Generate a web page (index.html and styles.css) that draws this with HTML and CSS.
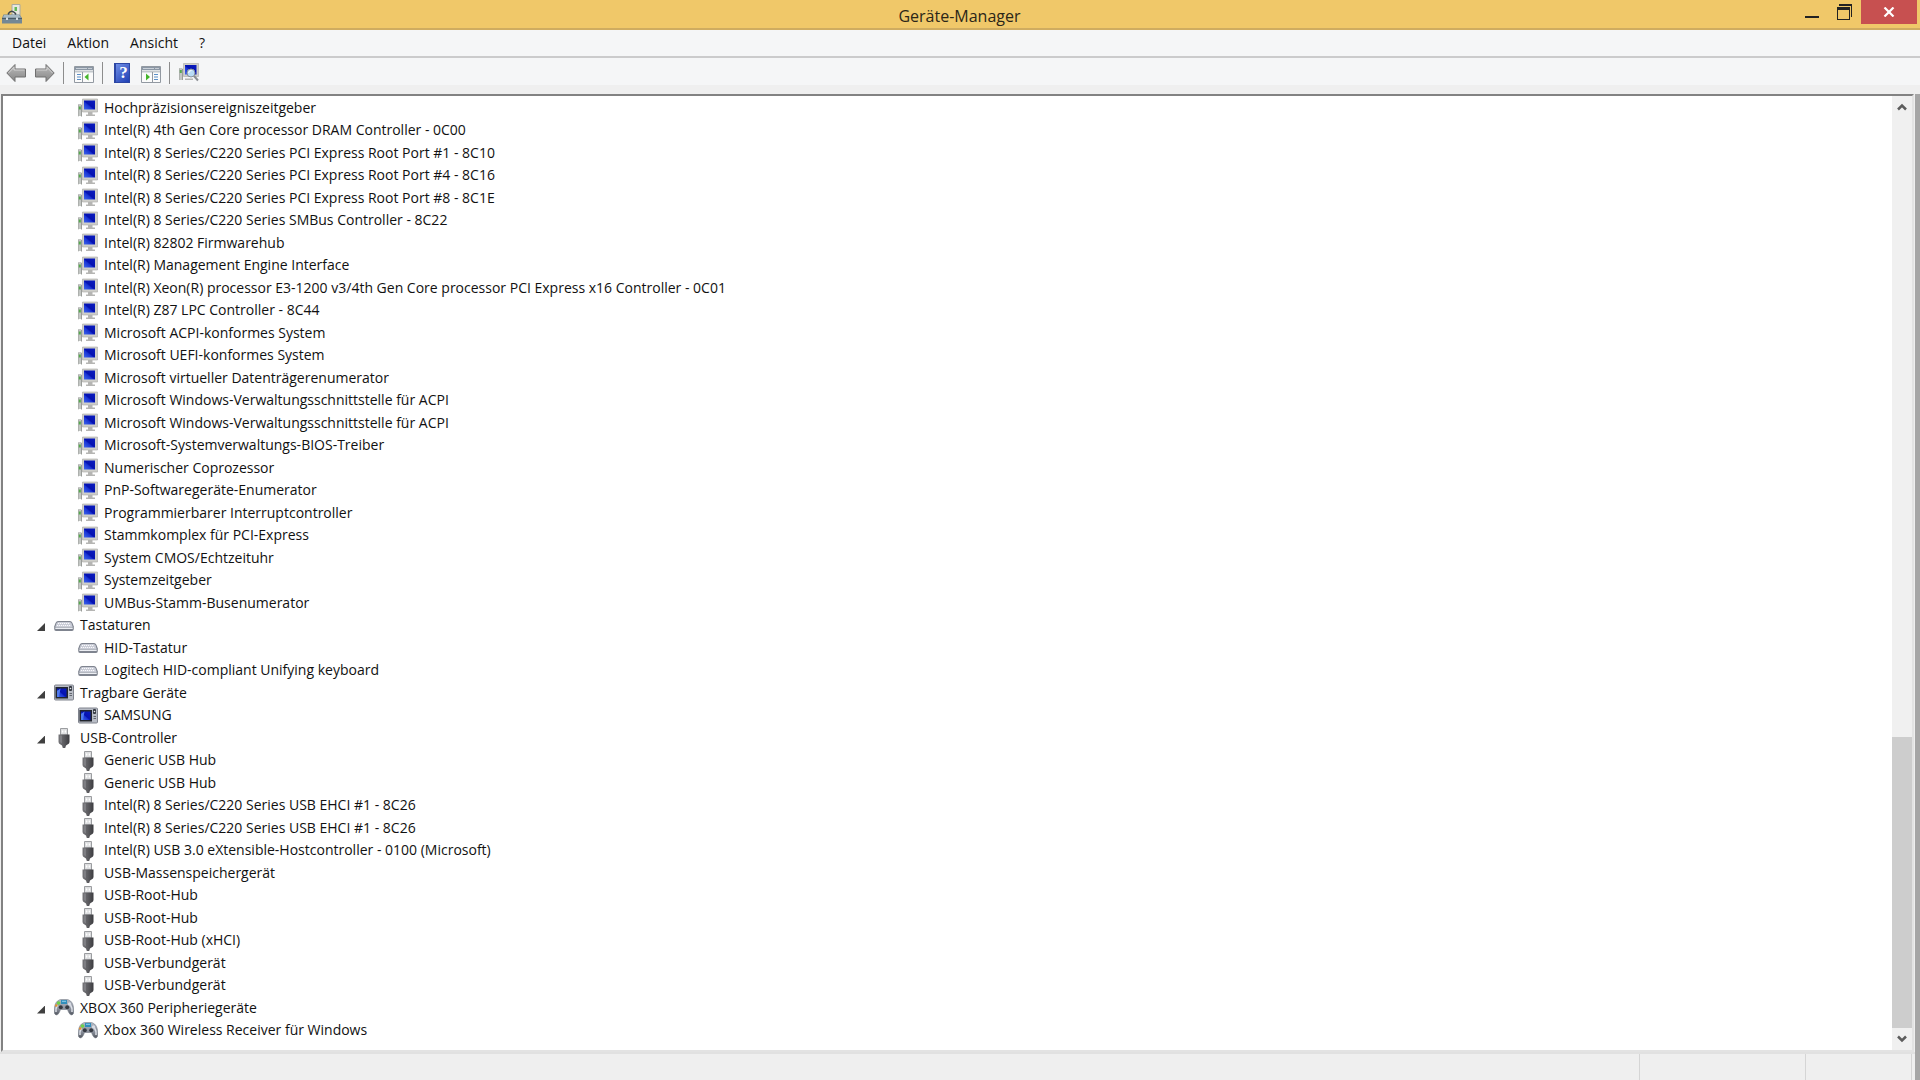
FILE: index.html
```
<!DOCTYPE html>
<html lang="de">
<head>
<meta charset="UTF-8">
<title>Geräte-Manager</title>
<link rel="stylesheet" href="styles.css">
</head>
<body>

<svg class="sprites" aria-hidden="true">
  <defs>
    <linearGradient id="g-screen" x1="0" y1="1" x2="1" y2="0">
      <stop offset="0" stop-color="#3f66ea"/><stop offset=".4" stop-color="#1a34d4"/>
      <stop offset=".5" stop-color="#0512b0"/><stop offset="1" stop-color="#0a1cc0"/>
    </linearGradient>
    <linearGradient id="g-arrow" x1="0" y1="0" x2="0" y2="1">
      <stop offset="0" stop-color="#bdbdbd"/><stop offset="1" stop-color="#858585"/>
    </linearGradient>
    <linearGradient id="g-plug" x1="0" y1="0" x2="1" y2="0">
      <stop offset="0" stop-color="#77777b"/><stop offset=".5" stop-color="#5c5c60"/><stop offset="1" stop-color="#3c3c40"/>
    </linearGradient>
    <linearGradient id="g-pad" x1="0" y1="0" x2="0" y2="1">
      <stop offset="0" stop-color="#b4bac6"/><stop offset=".6" stop-color="#8a909c"/><stop offset="1" stop-color="#50545c"/>
    </linearGradient>
  </defs>
  <!-- tower and monitor -->
  <symbol id="i-system" viewBox="0 0 20 20">
    <path d="M0 6h3.500v12H0z" fill="#c3c6c3"/>
    <path d="M0 18.500V7M3.500 7v11.500" stroke="#999c99" fill="none"/>
    <path d="M.8 8.500h2v3h-2z" fill="#55a84c"/>
    <path d="M4.500 1h15v13h-15z" fill="#cfcfca" stroke="#aaaaa6" stroke-width=".6"/>
    <path d="M6 2.500h11v9H6z" fill="url(#g-screen)"/>
    <path d="M10 14h4.500v2.500H17V18H8v-1.500h2z" fill="#b5b5b3"/>
  </symbol>
  <symbol id="i-keyboard" viewBox="0 0 20 20">
    <path d="M4 5h12q1.500 0 2.500 2l1.300 3.500v2.500q0 2-1.800 2H2Q.2 15 .2 13v-2.500L1.500 7q1-2 2.500-2z" fill="#7f848f"/>
    <path d="M4.300 6h11.400q1.300 0 1.900 1.500l1.100 3.500H1.300l1.100-3.500q.600-1.500 1.900-1.500z" fill="#c9ccd6"/>
    <path d="M4 7.500h12M3 9.500h14" stroke="#fafafd" stroke-dasharray="1.200 .8"/>
    <path d="M1.300 11.500h17.400V13H1.300z" fill="#eceef3"/>
  </symbol>
  <symbol id="i-portable" viewBox="0 0 20 20">
    <rect x=".5" y="2" width="19" height="15" rx="1" fill="#b9bdc6" stroke="#80848e"/>
    <path d="M1.500 4h12.500v11.500H1.500z" fill="#22262e"/>
    <path d="M3 5.500h9.500v8.500H3z" fill="url(#g-screen)"/>
    <path d="M3 14V8l3.500-2.500L5 14z" fill="#4f7aee"/>
    <rect x="15" y="3" width="3" height="5" rx="1" fill="#343841"/>
    <circle cx="16.500" cy="5.500" r=".8" fill="#e4e6ea"/>
    <path d="M15.500 10.500h2.500M15.500 12.500h2.500" stroke="#62666f"/>
  </symbol>
  <symbol id="i-usb" viewBox="0 0 20 20">
    <path d="M6.500.5h7V7h-7z" fill="#dddee0" stroke="#9b9da0"/>
    <path d="M8 2.500h1.300v2H8zM10.700 2.500H12v2h-1.300z" fill="#fff"/>
    <path d="M4.500 6.500h11V14q0 1.500-2 2.500l-1.500 1-.8 2.500H8.800L8 17.500l-1.500-1q-2-1-2-2.500z" fill="url(#g-plug)"/>
    <path d="M6 7.500V14l2 1.500V7.500z" fill="#8c8c91" opacity=".6"/>
  </symbol>
  <symbol id="i-gamepad" viewBox="0 0 20 20">
    <path d="M3.500 3Q6 1 8 1.500h4q2-.5 4.500 1.500 3 2.500 3.300 9.500.1 4-1.800 4.500-2 .5-3.500-3l-1-2.500h-7l-1 2.500q-1.500 3.500-3.500 3Q.1 16.500.2 12.500.5 5.500 3.500 3z" fill="url(#g-pad)" stroke="#777d88" stroke-width=".6"/>
    <path d="M2 14q-.5-4 1.500-7M18 14q.5-4-1.500-7" stroke="#dfe2e9" stroke-width="1.500" fill="none"/>
    <rect x="7" y="2" width="6" height="4" fill="#318dbb"/>
    <path d="M8 2.800h4v1H8z" fill="#8fd0ec"/>
    <circle cx="4.500" cy="5" r="1.800" fill="#6ed34a"/>
    <circle cx="2.300" cy="7.500" r="1.200" fill="#e8912b"/>
    <circle cx="15.500" cy="6" r="1.700" fill="#d8dce4"/>
    <circle cx="6.800" cy="9.300" r="2" fill="#353941"/>
    <circle cx="13.200" cy="9.300" r="2" fill="#353941"/>
  </symbol>
  <symbol id="i-toolbox" viewBox="0 0 20 20">
    <path d="M10 .5h8V14h-8z" fill="#e7e8e1" stroke="#a9aaa0"/>
    <path d="M12.500 3h2.500v4h-2.500z" fill="#63b957"/>
    <path d="M6.500 12V9.500Q9.500 5 13.500 9.500V12" fill="none" stroke="#3f464b" stroke-width="1.500"/>
    <path d="M1.500 10.500h16L20 14v5.500H0V14z" fill="#748895"/>
    <path d="M2 11h15l2 2.500H1z" fill="#a9bbc5"/>
    <path d="M0 14.500h20" stroke="#4b5c67"/>
    <path d="M4 13.500h2v2.500H4zM14 13.500h2v2.500h-2z" fill="#d5dde2"/>
  </symbol>
  <symbol id="i-back" viewBox="0 0 20 20">
    <path d="M.8 10L9 1.500V6H19.500v8H9v4.500z" fill="url(#g-arrow)" stroke="#707070"/>
    <path d="M2.500 10L8 4.300V7h10.500" fill="none" stroke="#dadada" stroke-width=".8"/>
  </symbol>
  <symbol id="i-forward" viewBox="0 0 20 20">
    <path d="M19.200 10L11 1.500V6H.5v8H11v4.500z" fill="url(#g-arrow)" stroke="#707070"/>
    <path d="M1.500 7H12V4.300L17.500 10" fill="none" stroke="#dadada" stroke-width=".8"/>
  </symbol>
  <symbol id="i-tree" viewBox="0 0 20 20">
    <path d="M.5 3.500h19v16H.5z" fill="#fbfbfb" stroke="#9299a1"/>
    <path d="M1 4h18v3H1z" fill="#8b97a5"/>
    <path d="M2 5.500h11" stroke="#c9d0d8"/>
    <path d="M14.500 5.500h1M16.500 5.500h1" stroke="#fff"/>
    <path d="M1 8.500h18" stroke="#c3c8cd" stroke-width="2"/>
    <path d="M8.500 9v10" stroke="#9299a1"/>
    <path d="M3 11.500h4M3 14h4M3 16.500h4" stroke="#5b8fc7"/>
    <path d="M14.500 10.500v7L10.500 14z" fill="#45b52c"/>
  </symbol>
  <symbol id="i-actions" viewBox="0 0 20 20">
    <path d="M.5 3.500h19v16H.5z" fill="#fbfbfb" stroke="#9299a1"/>
    <path d="M1 4h18v3H1z" fill="#8b97a5"/>
    <path d="M2 5.500h11" stroke="#c9d0d8"/>
    <path d="M14.500 5.500h1M16.500 5.500h1" stroke="#fff"/>
    <path d="M1 8.500h18" stroke="#c3c8cd" stroke-width="2"/>
    <path d="M11.500 9v10" stroke="#9299a1"/>
    <path d="M13 11.500h4M13 14h4M13 16.500h4" stroke="#5b8fc7"/>
    <path d="M5 10.500v7L9 14z" fill="#45b52c"/>
  </symbol>
  <symbol id="i-scan" viewBox="0 0 20 20">
    <path d="M0 5h3.500v12H0z" fill="#c3c6c3"/>
    <path d="M0 17V5.500M3.500 6v11" stroke="#999c99"/>
    <path d="M.8 7h2v3h-2z" fill="#55a84c"/>
    <path d="M4.500.5h15v13h-15z" fill="#cfcfca" stroke="#aaaaa6" stroke-width=".6"/>
    <path d="M6 2h11.500v9.500H6z" fill="url(#g-screen)"/>
    <path d="M6 15.500h8V17H6z" fill="#b5b5b3"/>
    <path d="M15 13l4 4.500" stroke="#8b8e92" stroke-width="2"/>
    <circle cx="12" cy="10" r="4" fill="#b9dcf6" stroke="#8a9098"/>
    <path d="M9.500 10q.5-2.500 3-2.500" stroke="#fff" fill="none"/>
  </symbol>
</svg>

<div class="window">
  <header class="titlebar">
    <svg class="icon"><use href="#i-toolbox"/></svg>
    <h1>Geräte-Manager</h1>
    <div class="caption">
      <button type="button" aria-label="Minimieren"><svg width="16" height="16"><path d="M1 12h14v2H1z" fill="#222"/></svg></button>
      <button type="button" aria-label="Verkleinern"><svg width="16" height="16"><path d="M2 0h13v13h-1V2H2zM0 3h13v13H0zM1 6v9h11V6z" fill="#222" fill-rule="evenodd"/></svg></button>
      <button type="button" class="close" aria-label="Schließen"><svg width="12" height="10"><path d="M1.500.5l9 9M10.500.5l-9 9" stroke="#fff" stroke-width="2.200"/></svg></button>
    </div>
  </header>

  <nav class="menubar">
    <button type="button">Datei</button>
    <button type="button">Aktion</button>
    <button type="button">Ansicht</button>
    <button type="button">?</button>
  </nav>

  <div class="toolbar">
    <button type="button" aria-label="Zurück"><svg class="icon"><use href="#i-back"/></svg></button>
    <button type="button" aria-label="Vorwärts"><svg class="icon"><use href="#i-forward"/></svg></button>
    <span class="sep"></span>
    <button type="button" aria-label="Konsolenstruktur"><svg class="icon"><use href="#i-tree"/></svg></button>
    <span class="sep"></span>
    <button type="button" class="help" aria-label="Hilfe">?</button>
    <button type="button" aria-label="Aktionsbereich"><svg class="icon"><use href="#i-actions"/></svg></button>
    <span class="sep"></span>
    <button type="button" aria-label="Nach geänderter Hardware suchen"><svg class="icon"><use href="#i-scan"/></svg></button>
  </div>

  <main class="content">
    <div class="pane">
      <ul class="tree" role="tree">
        <li class="dev" role="treeitem"><svg class="icon"><use href="#i-system"/></svg>Hochpräzisionsereigniszeitgeber</li>
        <li class="dev" role="treeitem"><svg class="icon"><use href="#i-system"/></svg>Intel(R) 4th Gen Core processor DRAM Controller - 0C00</li>
        <li class="dev" role="treeitem"><svg class="icon"><use href="#i-system"/></svg>Intel(R) 8 Series/C220 Series PCI Express Root Port #1 - 8C10</li>
        <li class="dev" role="treeitem"><svg class="icon"><use href="#i-system"/></svg>Intel(R) 8 Series/C220 Series PCI Express Root Port #4 - 8C16</li>
        <li class="dev" role="treeitem"><svg class="icon"><use href="#i-system"/></svg>Intel(R) 8 Series/C220 Series PCI Express Root Port #8 - 8C1E</li>
        <li class="dev" role="treeitem"><svg class="icon"><use href="#i-system"/></svg>Intel(R) 8 Series/C220 Series SMBus Controller - 8C22</li>
        <li class="dev" role="treeitem"><svg class="icon"><use href="#i-system"/></svg>Intel(R) 82802 Firmwarehub</li>
        <li class="dev" role="treeitem"><svg class="icon"><use href="#i-system"/></svg>Intel(R) Management Engine Interface</li>
        <li class="dev" role="treeitem"><svg class="icon"><use href="#i-system"/></svg>Intel(R) Xeon(R) processor E3-1200 v3/4th Gen Core processor PCI Express x16 Controller - 0C01</li>
        <li class="dev" role="treeitem"><svg class="icon"><use href="#i-system"/></svg>Intel(R) Z87 LPC Controller - 8C44</li>
        <li class="dev" role="treeitem"><svg class="icon"><use href="#i-system"/></svg>Microsoft ACPI-konformes System</li>
        <li class="dev" role="treeitem"><svg class="icon"><use href="#i-system"/></svg>Microsoft UEFI-konformes System</li>
        <li class="dev" role="treeitem"><svg class="icon"><use href="#i-system"/></svg>Microsoft virtueller Datenträgerenumerator</li>
        <li class="dev" role="treeitem"><svg class="icon"><use href="#i-system"/></svg>Microsoft Windows-Verwaltungsschnittstelle für ACPI</li>
        <li class="dev" role="treeitem"><svg class="icon"><use href="#i-system"/></svg>Microsoft Windows-Verwaltungsschnittstelle für ACPI</li>
        <li class="dev" role="treeitem"><svg class="icon"><use href="#i-system"/></svg>Microsoft-Systemverwaltungs-BIOS-Treiber</li>
        <li class="dev" role="treeitem"><svg class="icon"><use href="#i-system"/></svg>Numerischer Coprozessor</li>
        <li class="dev" role="treeitem"><svg class="icon"><use href="#i-system"/></svg>PnP-Softwaregeräte-Enumerator</li>
        <li class="dev" role="treeitem"><svg class="icon"><use href="#i-system"/></svg>Programmierbarer Interruptcontroller</li>
        <li class="dev" role="treeitem"><svg class="icon"><use href="#i-system"/></svg>Stammkomplex für PCI-Express</li>
        <li class="dev" role="treeitem"><svg class="icon"><use href="#i-system"/></svg>System CMOS/Echtzeituhr</li>
        <li class="dev" role="treeitem"><svg class="icon"><use href="#i-system"/></svg>Systemzeitgeber</li>
        <li class="dev" role="treeitem"><svg class="icon"><use href="#i-system"/></svg>UMBus-Stamm-Busenumerator</li>
        <li class="cat" role="treeitem" aria-expanded="true"><svg class="icon"><use href="#i-keyboard"/></svg>Tastaturen</li>
        <li class="dev" role="treeitem"><svg class="icon"><use href="#i-keyboard"/></svg>HID-Tastatur</li>
        <li class="dev" role="treeitem"><svg class="icon"><use href="#i-keyboard"/></svg>Logitech HID-compliant Unifying keyboard</li>
        <li class="cat" role="treeitem" aria-expanded="true"><svg class="icon"><use href="#i-portable"/></svg>Tragbare Geräte</li>
        <li class="dev" role="treeitem"><svg class="icon"><use href="#i-portable"/></svg>SAMSUNG</li>
        <li class="cat" role="treeitem" aria-expanded="true"><svg class="icon"><use href="#i-usb"/></svg>USB-Controller</li>
        <li class="dev" role="treeitem"><svg class="icon"><use href="#i-usb"/></svg>Generic USB Hub</li>
        <li class="dev" role="treeitem"><svg class="icon"><use href="#i-usb"/></svg>Generic USB Hub</li>
        <li class="dev" role="treeitem"><svg class="icon"><use href="#i-usb"/></svg>Intel(R) 8 Series/C220 Series USB EHCI #1 - 8C26</li>
        <li class="dev" role="treeitem"><svg class="icon"><use href="#i-usb"/></svg>Intel(R) 8 Series/C220 Series USB EHCI #1 - 8C26</li>
        <li class="dev" role="treeitem"><svg class="icon"><use href="#i-usb"/></svg>Intel(R) USB 3.0 eXtensible-Hostcontroller - 0100 (Microsoft)</li>
        <li class="dev" role="treeitem"><svg class="icon"><use href="#i-usb"/></svg>USB-Massenspeichergerät</li>
        <li class="dev" role="treeitem"><svg class="icon"><use href="#i-usb"/></svg>USB-Root-Hub</li>
        <li class="dev" role="treeitem"><svg class="icon"><use href="#i-usb"/></svg>USB-Root-Hub</li>
        <li class="dev" role="treeitem"><svg class="icon"><use href="#i-usb"/></svg>USB-Root-Hub (xHCI)</li>
        <li class="dev" role="treeitem"><svg class="icon"><use href="#i-usb"/></svg>USB-Verbundgerät</li>
        <li class="dev" role="treeitem"><svg class="icon"><use href="#i-usb"/></svg>USB-Verbundgerät</li>
        <li class="cat" role="treeitem" aria-expanded="true"><svg class="icon"><use href="#i-gamepad"/></svg>XBOX 360 Peripheriegeräte</li>
        <li class="dev" role="treeitem"><svg class="icon"><use href="#i-gamepad"/></svg>Xbox 360 Wireless Receiver für Windows</li>
      </ul>
      <div class="scrollbar">
        <button type="button" aria-label="Nach oben"><svg width="10" height="8"><path d="M1 6.500l4-4 4 4" fill="none" stroke="#5c5c5c" stroke-width="2.500"/></svg></button>
        <div class="track"><div class="thumb"></div></div>
        <button type="button" aria-label="Nach unten"><svg width="10" height="8"><path d="M1 1.500l4 4 4-4" fill="none" stroke="#5c5c5c" stroke-width="2.500"/></svg></button>
      </div>
    </div>
    <footer class="statusbar">
      <span class="main"></span>
      <span class="mid"></span>
      <span class="end"></span>
    </footer>
  </main>
</div>

</body>
</html>
```
FILE: styles.css
```
* {
  box-sizing: border-box;
}
body {
  margin: 0;
  font-family: "Open Sans", "Noto Sans", sans-serif;
  font-size: 14px;
  color: #111;
  background: #efefef;
}
button {
  display: flex;
  align-items: center;
  justify-content: center;
  margin: 0;
  padding: 0;
  border: 0;
  background: none;
  font: inherit;
  color: inherit;
}
.sprites {
  position: absolute;
  width: 0;
  height: 0;
}
.icon {
  display: block;
  flex: none;
  width: 20px;
  height: 20px;
}
.window {
  display: flex;
  flex-direction: column;
  min-height: 100vh;
}

/* title bar */
.titlebar {
  display: grid;
  grid-template-columns: 1fr auto 1fr;
  align-items: center;
  height: 30px;
  padding: 0 3px 0 2px;
  background: #f0c869;
  border-bottom: 2px solid #cfac60;
}
.titlebar h1 {
  margin: 4px 0 0;
  font-size: 16px;
  font-weight: normal;
  line-height: 22px;
  color: #2b2618;
}
.caption {
  display: flex;
  align-self: start;
  justify-content: flex-end;
}
.caption button {
  width: 33px;
  height: 24px;
}
.caption .close {
  width: 56px;
  background: #c75050;
}

/* menu + toolbar */
.menubar {
  display: flex;
  gap: 21px;
  height: 28px;
  padding: 0 12px 2px;
  background: #f5f6f7;
  border-bottom: 2px solid #cbcbcc;
}
.toolbar {
  display: flex;
  align-items: center;
  gap: 9px;
  height: 27px;
  padding: 3px 6px 0;
  background: #f5f6f7;
}
.toolbar .sep {
  width: 1px;
  height: 22px;
  margin: 0 1px 0 -1px;
  background: #8d8d8d;
}
.toolbar .sep ~ .sep {
  margin-right: 0;
}
.toolbar .help {
  width: 16px;
  height: 20px;
  margin: 0 2px;
  padding-left: 2px;
  border: 1px solid #2c46a4;
  border-left-width: 2px;
  background: linear-gradient(135deg, #6f8ee6, #1f3fb4);
  color: #fff;
  font: bold 17px "Liberation Serif", serif;
}

/* device list */
.content {
  display: flex;
  flex: 1;
  flex-direction: column;
  margin-top: 9px;
  border-right: 5px solid #a6a6a6;
}
.pane {
  display: flex;
  flex: 1;
  margin: 0 1px;
  background: #fff;
  border: 2px solid #e3e3e3;
  border-top-color: #828282;
  border-left-color: #828282;
}
.tree {
  flex: 1;
  margin: 0;
  padding: 0 0 8px;
  list-style: none;
}
.tree li {
  display: flex;
  align-items: center;
  gap: 6px;
  height: 22px;
  white-space: nowrap;
}
.tree li:nth-child(even) {
  height: 23px;
}
.tree .icon {
  margin-top: 2px;
}
.tree .dev {
  padding-left: 75px;
}
.tree .cat {
  padding-left: 34px;
}
.cat::before {
  content: "";
  width: 8px;
  height: 8px;
  margin: 5px 3px 0 0;
  background: #404040;
  clip-path: polygon(100% 0, 100% 100%, 0 100%);
}
.scrollbar {
  display: flex;
  flex-direction: column;
  width: 20px;
  background: #f0f0f0;
}
.scrollbar button {
  height: 22px;
}
.track {
  display: flex;
  flex: 1;
  flex-direction: column;
  justify-content: flex-end;
}
.thumb {
  height: 32%;
  background: #cdcdcd;
}

/* status bar */
.statusbar {
  display: flex;
  height: 28px;
  padding-right: 3px;
  background: #efefef;
  border-top: 2px solid #e1e1e1;
}
.statusbar span {
  border-right: 1px solid #d5d5d5;
}
.statusbar .main {
  flex: 1;
}
.statusbar .mid {
  width: 166px;
}
.statusbar .end {
  width: 106px;
}
```
